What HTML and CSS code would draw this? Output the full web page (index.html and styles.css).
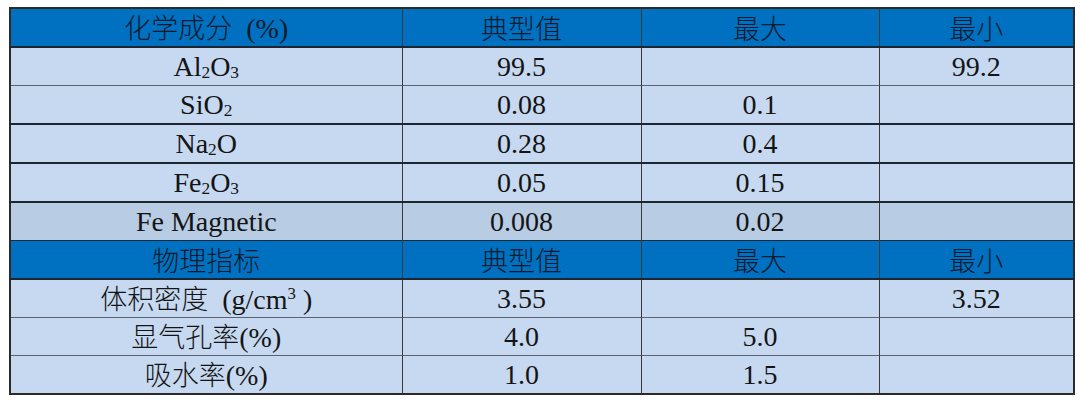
FILE: index.html
```html
<!DOCTYPE html>
<html lang="en">
<head>
<meta charset="utf-8">
<link rel="stylesheet" href="styles.css">
</head>
<body>
<table class="spec">
  <colgroup>
    <col class="c1"><col class="c2"><col class="c3"><col class="c4">
  </colgroup>
  <tr class="head"><td><span class="zh">化学成分</span>&nbsp;&nbsp;(%)</td><td class="zh">典型值</td><td class="zh">最大</td><td class="zh">最小</td></tr>
  <tr class="thick"><td>Al<sub>2</sub>O<sub>3</sub></td><td>99.5</td><td></td><td>99.2</td></tr>
  <tr class="thin"><td>SiO<sub>2</sub></td><td>0.08</td><td>0.1</td><td></td></tr>
  <tr class="thick"><td>Na<sub>2</sub>O</td><td>0.28</td><td>0.4</td><td></td></tr>
  <tr class="thick"><td>Fe<sub>2</sub>O<sub>3</sub></td><td>0.05</td><td>0.15</td><td></td></tr>
  <tr class="alt thick"><td>Fe Magnetic</td><td>0.008</td><td>0.02</td><td></td></tr>
  <tr class="head"><td class="zh">物理指标</td><td class="zh">典型值</td><td class="zh">最大</td><td class="zh">最小</td></tr>
  <tr class="thick"><td><span class="zh">体积密度</span>&nbsp;&nbsp;(g/cm<sup>3</sup>&nbsp;)</td><td>3.55</td><td></td><td>3.52</td></tr>
  <tr class="thin"><td><span class="zh">显气孔率</span>(%)</td><td>4.0</td><td>5.0</td><td></td></tr>
  <tr class="thin"><td><span class="zh">吸水率</span>(%)</td><td>1.0</td><td>1.5</td><td></td></tr>
</table>
</body>
</html>
```

FILE: styles.css
```css
html, body {
  margin: 0;
  padding: 0;
  background: #ffffff;
}

.spec {
  margin: 7px 0 0 9px;
  width: 1064px;
  border-collapse: collapse;
  table-layout: fixed;
  font-family: "Liberation Serif", "Times New Roman", serif;
  font-size: 28px;
  color: #141414;
  border: 2px solid #2b2b2b;
}

.zh {
  font-family: "Noto Sans CJK SC", sans-serif;
  font-weight: 300;
  font-size: 27px;
}

.c1 { width: 392px; }
.c2 { width: 239px; }
.c3 { width: 238px; }
.c4 { width: 195px; }

.spec td {
  height: 37px;
  padding: 0;
  text-align: center;
  vertical-align: middle;
  line-height: 30px;
  background: #c6d9f0;
  border-left: 1.5px solid #3a3a3a;
  border-right: 1.5px solid #3a3a3a;
  border-top: 1px solid #6a7080;
  white-space: nowrap;
}

.spec tr.thick td { border-top: 2px solid #1d2530; }
.spec tr.thin td { border-top: 1px solid #5c6370; }

.spec tr.head td {
  background: #0070c0;
  color: #0c1a2c;
  border-top: 1px solid #1d2a3a;
}

.spec tr.alt td {
  background: #b8cce4;
}

.spec sub {
  font-size: 0.62em;
  vertical-align: -0.12em;
  line-height: 0;
}

.spec sup {
  font-size: 0.6em;
  vertical-align: 0.6em;
  line-height: 0;
}
```
